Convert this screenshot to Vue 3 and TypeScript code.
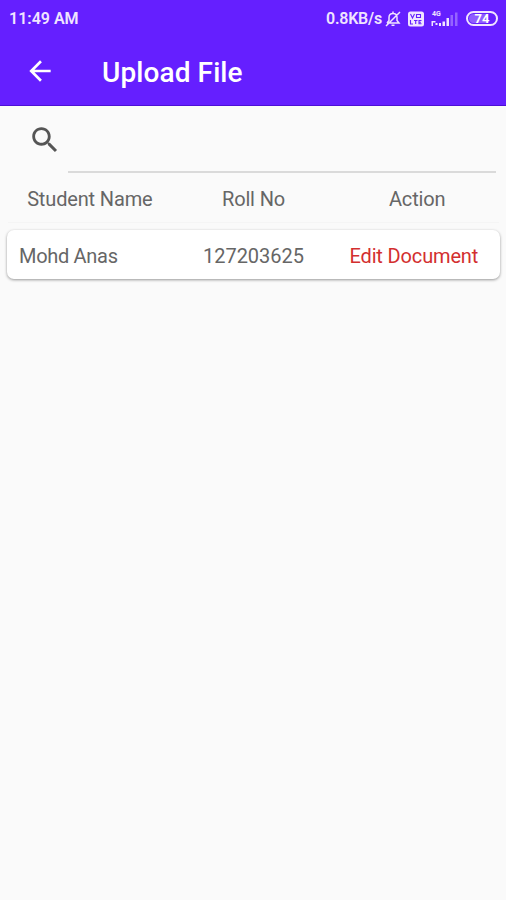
<script setup lang="ts">
interface Student {
  name: string
  roll: string
}

const columns: string[] = ['Student Name', 'Roll No', 'Action']
const students: Student[] = [{ name: 'Mohd Anas', roll: '127203625' }]
</script>

<template>
  <div class="screen">
    <header class="top">
      <div class="status">
        <span class="clock">11:49 AM</span>
        <div class="indicators">
          <span class="speed">0.8KB/s</span>
          <svg class="bell" width="18" height="18" viewBox="0 0 18 18" fill="none" stroke="currentColor" stroke-width="1.5">
            <path d="M3 13h12l-2-2.500V7.500C13 5 11.500 3.500 9 3.500S5 5 5 7.500v3L3 13M7.500 15.300h3M9 1.500v2M2 16 16 2" />
          </svg>
          <svg class="volte" width="16" height="16" viewBox="0 0 16 16">
            <rect x="0" y="0.500" width="16" height="15" rx="2.500" fill="currentColor" />
            <path d="M2.500 3l2 4 2-4M8.500 3.500h4v3h-4zM2.500 9v4H5M6 9.500h3.500M7.700 9.500V13M13.500 9.500H11v3.300h2.500M11 11.200h2" fill="none" stroke="#651fff" stroke-width="1.100" />
          </svg>
          <svg class="signal" width="27" height="18" viewBox="0 0 27 18" fill="currentColor">
            <text class="network" x="1" y="6">4G</text>
            <path d="M0.500 11h4v1.500H2V16H0.500zM4.500 13h2v2h-2zM8 13h2v3H8zM11.500 11.500h2.500V16h-2.500zM15.500 8h2.500v8h-2.500z" />
            <path class="faint" d="M19.500 5H22v11h-2.500zM24 2.500h2.500V16H24z" />
          </svg>
          <span class="battery"><span class="level">74</span></span>
        </div>
      </div>
      <div class="toolbar">
        <svg class="back" width="32" height="32" viewBox="0 0 24 24" fill="currentColor">
          <path d="M20 11H7.830l5.590-5.590L12 4l-8 8 8 8 1.410-1.410L7.830 13H20v-2z" />
        </svg>
        <h1 class="title">Upload File</h1>
      </div>
    </header>

    <div class="search">
      <svg class="magnifier" width="34" height="34" viewBox="0 0 24 24" fill="currentColor">
        <path d="M15.500 14h-.79l-.28-.27C15.410 12.590 16 11.110 16 9.500 16 5.910 13.090 3 9.500 3S3 5.910 3 9.500 5.910 16 9.500 16c1.610 0 3.090-.59 4.230-1.570l.27.28v.79l5 4.990L20.490 19l-4.990-5zm-6 0C7.010 14 5 11.990 5 9.500S7.010 5 9.500 5 14 7.010 14 9.500 11.990 14 9.500 14z" />
      </svg>
      <input class="query" type="text" aria-label="Search" />
    </div>

    <div class="grid head">
      <span v-for="column in columns" :key="column">{{ column }}</span>
    </div>

    <div v-for="student in students" :key="student.roll" class="grid card">
      <span class="name">{{ student.name }}</span>
      <span class="roll">{{ student.roll }}</span>
      <a class="edit">Edit Document</a>
    </div>
  </div>
</template>

<style>
body {
  margin: 0;
  background: #fafafa;
}
</style>

<style scoped>
.screen {
  min-height: 900px;
  background: #fafafa;
  font-family: Roboto, sans-serif;
  font-size: 20px;
  color: #666;
}
.top {
  height: 106px;
  box-sizing: border-box;
  background: #651fff;
  border-bottom: 1px solid #4d0fd6;
  color: #fff;
}
.status {
  display: flex;
  align-items: center;
  justify-content: space-between;
  height: 37px;
  padding: 0 8px 0 9px;
  color: #f0e4ff;
}
.clock,
.speed {
  padding-top: 1px;
  font-size: 16px;
  font-weight: 600;
  line-height: 20px;
}
.speed {
  letter-spacing: -0.2px;
}
.indicators {
  display: flex;
  align-items: center;
}
.bell {
  margin: 0 6px 0 2px;
}
.volte {
  margin-right: 7px;
}
.signal {
  margin-right: 8px;
}
.network {
  font-size: 7px;
  font-weight: 700;
}
.faint {
  opacity: 0.35;
}
.battery {
  display: flex;
  box-sizing: border-box;
  width: 32px;
  height: 15px;
  padding: 1px;
  border: 2px solid currentColor;
  border-radius: 8px;
}
.level {
  flex: 1;
  border-radius: 5px;
  background: linear-gradient(90deg, #8f5cff 74%, transparent 74%);
  color: #fff;
  font-size: 13px;
  font-weight: 700;
  line-height: 10px;
  text-align: center;
}
.toolbar {
  display: flex;
  align-items: center;
  height: 68px;
  padding-left: 24px;
}
.title {
  margin: 3px 0 0 46px;
  font-size: 28px;
  font-weight: 500;
  letter-spacing: 0.1px;
  line-height: 32px;
}
.search {
  display: flex;
  align-items: center;
  height: 67px;
  padding: 0 10px 0 28px;
}
.magnifier {
  flex: none;
  margin-right: 6px;
  color: #555;
}
.query {
  flex: 1;
  align-self: stretch;
  min-width: 0;
  padding: 0;
  border: 0;
  border-bottom: 2px solid #dadada;
  outline: 0;
  background: transparent;
  font: inherit;
}
.grid {
  display: grid;
  grid-template-columns: repeat(3, 1fr);
  align-items: center;
  text-align: center;
}
.head {
  height: 47px;
  margin: 0 7px 0 8px;
  padding-top: 2px;
  border-bottom: 1px solid #f5f5f5;
  letter-spacing: -0.15px;
}
.card {
  height: 49px;
  margin: 7px 6px 0 7px;
  border-radius: 7px;
  background: #fff;
  box-shadow: 0 1px 3px rgba(0, 0, 0, 0.4);
}
.card > * {
  padding-top: 2px;
}
.name {
  padding-left: 12px;
  letter-spacing: -0.3px;
  text-align: left;
}
.edit {
  padding-right: 8px;
  color: #d32f2f;
  letter-spacing: -0.15px;
}
</style>
